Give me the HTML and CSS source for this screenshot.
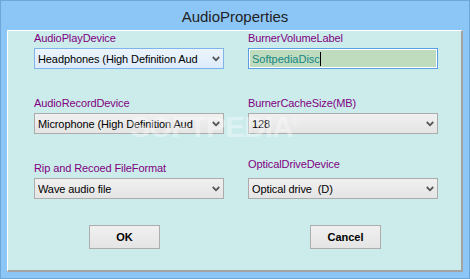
FILE: index.html
```html
<!DOCTYPE html>
<html>
<head>
<meta charset="utf-8">
<link rel="stylesheet" href="styles.css">
</head>
<body>
<div class="window">
  <div class="title">AudioProperties</div>
  <div class="panel">
    <div class="grid">
      <div class="field">
        <div class="label">AudioPlayDevice</div>
        <div class="combo focus"><span class="val">Headphones (High Definition Aud</span><svg class="chev" width="8" height="6" viewBox="0 0 8 6"><path d="M0.8 1 L4 4.3 L7.2 1" fill="none" stroke="#555" stroke-width="1.8"/></svg></div>
      </div>
      <div class="field">
        <div class="label">BurnerVolumeLabel</div>
        <div class="textbox"><span class="tval">SoftpediaDisc</span><span class="caret"></span></div>
      </div>
      <div class="field">
        <div class="label">AudioRecordDevice</div>
        <div class="combo"><span class="val">Microphone (High Definition Aud</span><svg class="chev" width="8" height="6" viewBox="0 0 8 6"><path d="M0.8 1 L4 4.3 L7.2 1" fill="none" stroke="#555" stroke-width="1.8"/></svg></div>
      </div>
      <div class="field">
        <div class="label">BurnerCacheSize(MB)</div>
        <div class="combo"><span class="val">128</span><svg class="chev" width="8" height="6" viewBox="0 0 8 6"><path d="M0.8 1 L4 4.3 L7.2 1" fill="none" stroke="#555" stroke-width="1.8"/></svg></div>
      </div>
      <div class="field">
        <div class="label">Rip and Recoed FileFormat</div>
        <div class="combo"><span class="val">Wave audio file</span><svg class="chev" width="8" height="6" viewBox="0 0 8 6"><path d="M0.8 1 L4 4.3 L7.2 1" fill="none" stroke="#555" stroke-width="1.8"/></svg></div>
      </div>
      <div class="field">
        <div class="label raised">OpticalDriveDevice</div>
        <div class="combo"><span class="val">Optical drive&nbsp; (D)</span><svg class="chev" width="8" height="6" viewBox="0 0 8 6"><path d="M0.8 1 L4 4.3 L7.2 1" fill="none" stroke="#555" stroke-width="1.8"/></svg></div>
      </div>
    </div>
    <div class="buttons">
      <div class="btn">OK</div>
      <div class="btn cancel">Cancel</div>
    </div>
    <div class="watermark" aria-hidden="true">SOFTPEDIA<sup>®</sup></div>
  </div>
</div>
</body>
</html>
```
FILE: styles.css
```css
* { box-sizing: border-box; }
html, body { margin: 0; padding: 0; }
body {
  width: 470px;
  height: 279px;
  overflow: hidden;
  font-family: "Liberation Sans", Arial, sans-serif;
}
.window {
  width: 470px;
  height: 279px;
  background: #8cc6f7;
  border: 1px solid #6da6d9;
  display: flex;
  flex-direction: column;
}
.title {
  height: 29px;
  text-align: center;
  font-size: 15px;
  line-height: 29px;
  color: #222222;
  padding-top: 1px;
}
.panel {
  position: relative;
  margin: 0 6px;
  height: 242px;
  background: #ccecec;
  border-top: 1px solid #ffffff;
  border-left: 1px solid #ffffff;
  border-right: 2px solid #a3a3a3;
  border-bottom: 2px solid #a3a3a3;
  overflow: hidden;
}
.grid {
  display: grid;
  grid-template-columns: 190px 190px;
  column-gap: 24px;
  row-gap: 27px;
  padding-left: 26px;
}
.field {
  display: flex;
  flex-direction: column;
}
.label {
  font-size: 11px;
  letter-spacing: -0.1px;
  line-height: 14px;
  height: 14px;
  margin-bottom: 3px;
  color: #800080;
  white-space: nowrap;
}
.label.raised {
  margin-top: -4px;
  margin-bottom: 7px;
}
.combo {
  height: 21px;
  border: 1px solid #acacac;
  background: linear-gradient(#f0f0f0, #e5e5e5);
  display: flex;
  align-items: center;
  padding-left: 3px;
  padding-right: 3px;
  font-size: 11px;
  letter-spacing: -0.1px;
  color: #000;
}
.combo.focus {
  border-color: #7eb4ea;
  background: linear-gradient(#ecf4fc, #dcecfc);
}
.val {
  flex: 1;
  white-space: nowrap;
  overflow: hidden;
}
.chev { flex: none; }
.textbox {
  height: 21px;
  border: 1px solid #5a9fe6;
  box-shadow: inset 0 0 0 1px #ffffff;
  background: #bfdcbf;
  display: flex;
  align-items: center;
  padding-left: 3px;
  font-size: 11px;
  color: #138585;
}
.caret {
  width: 1px;
  height: 14px;
  background: #000;
}
.buttons {
  display: flex;
  padding-left: 81px;
  margin-top: 26px;
  gap: 150px;
}
.btn {
  width: 71px;
  height: 24px;
  border: 1px solid #adadad;
  background: linear-gradient(#f0f0f0, #e5e5e5);
  font-size: 11px;
  font-weight: bold;
  color: #000;
  display: flex;
  align-items: center;
  justify-content: center;
}
.watermark {
  position: absolute;
  left: 122px;
  top: 75px;
  font-size: 30px;
  line-height: 34px;
  font-weight: bold;
  letter-spacing: -1px;
  color: rgba(255, 255, 255, 0.35);
  pointer-events: none;
  white-space: nowrap;
}
.watermark sup {
  font-size: 10px;
}
```
